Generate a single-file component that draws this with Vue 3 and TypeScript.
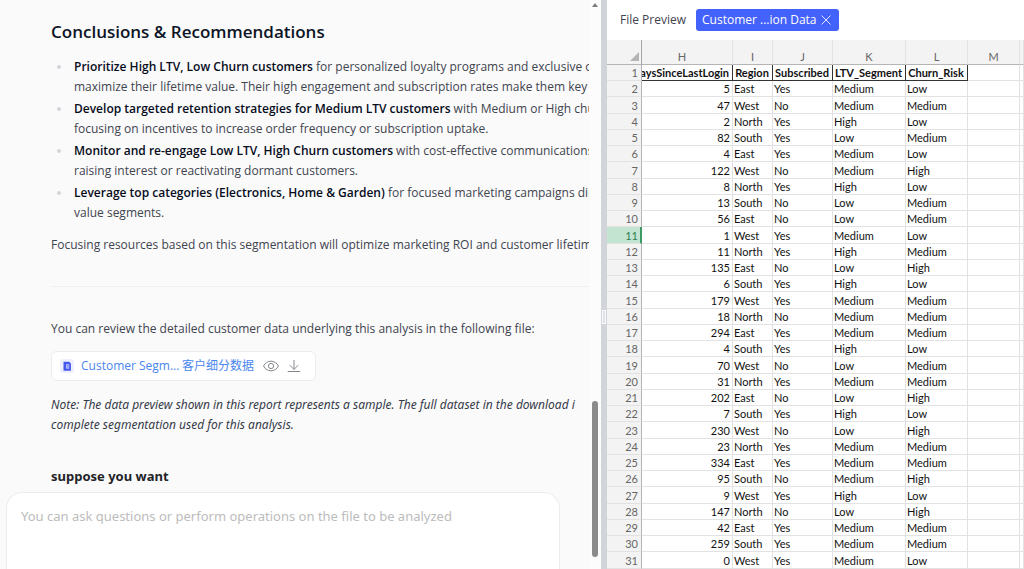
<script setup lang="ts">
import { ref } from 'vue'

interface Finding {
  lead: string
  rest: string
  next: string
}

interface Row {
  days: number
  region: string
  subscribed: string
  ltv: string
  churn: string
}

const findings: Finding[] = [
  {
    lead: 'Prioritize High LTV, Low Churn customers',
    rest: 'for personalized loyalty programs and exclusive off',
    next: 'maximize their lifetime value. Their high engagement and subscription rates make them key rev',
  },
  {
    lead: 'Develop targeted retention strategies for Medium LTV customers',
    rest: 'with Medium or High chu',
    next: 'focusing on incentives to increase order frequency or subscription uptake.',
  },
  {
    lead: 'Monitor and re-engage Low LTV, High Churn customers',
    rest: 'with cost-effective communications',
    next: 'raising interest or reactivating dormant customers.',
  },
  {
    lead: 'Leverage top categories (Electronics, Home & Garden)',
    rest: 'for focused marketing campaigns dire',
    next: 'value segments.',
  },
]

const source: [number, string, string, string, string][] = [
  [5, 'East', 'Yes', 'Medium', 'Low'],
  [47, 'West', 'No', 'Medium', 'Medium'],
  [2, 'North', 'Yes', 'High', 'Low'],
  [82, 'South', 'Yes', 'Low', 'Medium'],
  [4, 'East', 'Yes', 'Medium', 'Low'],
  [122, 'West', 'No', 'Medium', 'High'],
  [8, 'North', 'Yes', 'High', 'Low'],
  [13, 'South', 'No', 'Low', 'Medium'],
  [56, 'East', 'No', 'Low', 'Medium'],
  [1, 'West', 'Yes', 'Medium', 'Low'],
  [11, 'North', 'Yes', 'High', 'Medium'],
  [135, 'East', 'No', 'Low', 'High'],
  [6, 'South', 'Yes', 'High', 'Low'],
  [179, 'West', 'Yes', 'Medium', 'Medium'],
  [18, 'North', 'No', 'Medium', 'Medium'],
  [294, 'East', 'Yes', 'Medium', 'Medium'],
  [4, 'South', 'Yes', 'High', 'Low'],
  [70, 'West', 'No', 'Low', 'Medium'],
  [31, 'North', 'Yes', 'Medium', 'Medium'],
  [202, 'East', 'No', 'Low', 'High'],
  [7, 'South', 'Yes', 'High', 'Low'],
  [230, 'West', 'No', 'Low', 'High'],
  [23, 'North', 'Yes', 'Medium', 'Medium'],
  [334, 'East', 'Yes', 'Medium', 'Medium'],
  [95, 'South', 'No', 'Medium', 'High'],
  [9, 'West', 'Yes', 'High', 'Low'],
  [147, 'North', 'No', 'Low', 'High'],
  [42, 'East', 'Yes', 'Medium', 'Medium'],
  [259, 'South', 'Yes', 'Medium', 'Medium'],
  [0, 'West', 'Yes', 'Medium', 'Low'],
]

const rows: Row[] = source.map(([days, region, subscribed, ltv, churn]) => ({
  days,
  region,
  subscribed,
  ltv,
  churn,
}))

const letters = ['H', 'I', 'J', 'K', 'L', 'M', '']
const headings = ['DaysSinceLastLogin', 'Region', 'Subscribed', 'LTV_Segment', 'Churn_Risk']
const selectedRow = ref(11)
const question = ref('')
</script>

<template>
  <div class="workspace">
    <main class="chat">
      <div class="chat-column">
        <article class="report">
          <h2>Conclusions &amp; Recommendations</h2>
          <ul class="findings">
            <li v-for="item in findings" :key="item.lead">
              <strong>{{ item.lead }}</strong> {{ item.rest }}<br />{{ item.next }}
            </li>
          </ul>
          <p class="summary">
            Focusing resources based on this segmentation will optimize marketing ROI and customer lifetime v
          </p>
          <hr />
          <p class="review">You can review the detailed customer data underlying this analysis in the following file:</p>
          <div class="file-card">
            <svg class="file-icon" viewBox="0 0 16 16" aria-hidden="true">
              <rect width="16" height="16" rx="3" fill="#eef0fd" />
              <path d="M4 3h6.500l2 2v8.500H4z" fill="#4458ee" />
              <path d="M7 6h3.500v5H7z" fill="#c9d0fd" />
              <path d="M8 7.700h2M8 9.300h2" fill="none" stroke="#4458ee" stroke-width=".8" />
            </svg>
            <a class="file-name" href="#">Customer Segm...</a>
            <a class="file-title" href="#">客户细分数据</a>
            <button class="icon-button" type="button" aria-label="View">
              <svg viewBox="0 0 16 16" aria-hidden="true">
                <path d="M.5 8C2.300 4.700 4.900 3.200 8 3.200S13.700 4.700 15.500 8C13.700 11.300 11.100 12.800 8 12.800S2.300 11.300.5 8z" />
                <circle cx="8" cy="8" r="2.600" />
              </svg>
            </button>
            <button class="icon-button" type="button" aria-label="Download">
              <svg viewBox="0 0 16 16" aria-hidden="true">
                <path d="M8 2v9.400M3.800 7.200L8 11.400l4.200-4.200M1.700 13.500h12.600" />
              </svg>
            </button>
          </div>
          <p class="note">
            Note: The data preview shown in this report represents a sample. The full dataset in the download i<br />complete
            segmentation used for this analysis.
          </p>
          <h3>suppose you want</h3>
        </article>
        <form class="composer" @submit.prevent>
          <textarea
            v-model="question"
            aria-label="Question"
            placeholder="You can ask questions or perform operations on the file to be analyzed"
          ></textarea>
        </form>
      </div>
      <div class="scroll-track" aria-hidden="true">
        <svg class="scroll-arrow" viewBox="0 0 6 4"><path d="M0 4l3-4 3 4z" fill="#7d7d7d" /></svg>
        <div class="scroll-thumb"></div>
      </div>
    </main>

    <div class="splitter" role="separator" aria-orientation="vertical"><span class="grip"></span></div>

    <section class="preview">
      <header class="preview-bar">
        <span class="preview-label">File Preview</span>
        <div class="tab">
          <span>Customer ...ion Data</span>
          <button class="close" type="button" aria-label="Close file">
            <svg viewBox="0 0 10 10" aria-hidden="true"><path d="M.5.5l9 9M9.500.5l-9 9" /></svg>
          </button>
        </div>
      </header>
      <div class="sheet">
        <table>
          <colgroup>
            <col class="c-num" />
            <col class="c-h" />
            <col class="c-i" />
            <col class="c-j" />
            <col class="c-k" />
            <col class="c-l" />
            <col class="c-m" />
            <col />
          </colgroup>
          <thead>
            <tr>
              <th class="corner">
                <svg viewBox="0 0 9 9" aria-hidden="true"><path d="M9 0v9H0z" fill="#b5b5b5" /></svg>
              </th>
              <th v-for="letter in letters" :key="letter" scope="col" :class="{ clipped: letter === 'H' }">
                {{ letter }}
              </th>
            </tr>
          </thead>
          <tbody>
            <tr class="headings">
              <th class="num" scope="row">1</th>
              <td v-for="heading in headings" :key="heading" class="heading">
                <div>{{ heading }}</div>
              </td>
              <td></td>
              <td></td>
            </tr>
            <tr v-for="(row, index) in rows" :key="index">
              <th class="num" :class="{ selected: index + 2 === selectedRow }" scope="row">{{ index + 2 }}</th>
              <td class="days">{{ row.days }}</td>
              <td>{{ row.region }}</td>
              <td>{{ row.subscribed }}</td>
              <td>{{ row.ltv }}</td>
              <td>{{ row.churn }}</td>
              <td></td>
              <td></td>
            </tr>
          </tbody>
        </table>
      </div>
    </section>
  </div>
</template>

<style>
body {
  overflow: hidden;
}
</style>

<style scoped>
.workspace {
  display: grid;
  grid-template-columns: minmax(0, 601fr) 6px minmax(0, 417fr);
  height: 100vh;
  overflow: hidden;
  font-family: "Open Sans", "Noto Sans CJK SC", sans-serif;
  font-size: 12px;
  line-height: 20px;
  color: #40444f;
  background: #fafafa;
}

button {
  padding: 0;
  border: 0;
  background: none;
  cursor: pointer;
}

.chat {
  display: grid;
  grid-template-columns: minmax(0, 1fr) 12px;
  min-height: 0;
}

.chat-column {
  display: flex;
  flex-direction: column;
  min-height: 0;
}

.report {
  flex: 1;
  min-height: 0;
  padding: 20px 0 0 51px;
  overflow: hidden;
  white-space: nowrap;
}

h2 {
  margin: 0 0 13px;
  font-size: 17px;
  font-weight: 600;
  line-height: 24px;
  color: #0d1426;
}

.findings {
  display: flex;
  flex-direction: column;
  gap: 2px;
  margin: 0;
  padding: 0 0 0 23px;
  list-style: none;
}

.findings li {
  position: relative;
}

.findings li::before {
  content: "";
  position: absolute;
  top: 8px;
  left: -17px;
  width: 4px;
  height: 4px;
  border-radius: 50%;
  background: #d3d5da;
}

strong {
  font-weight: 600;
  color: #060c1c;
}

p {
  margin: 0;
}

.summary {
  padding-top: 12px;
}

hr {
  height: 1px;
  margin: 31px 0 32px;
  border: 0;
  background: #eeeff1;
}

.file-card {
  display: flex;
  align-items: center;
  box-sizing: border-box;
  width: 265px;
  height: 30px;
  margin: 12px 0 14px;
  padding: 0 6px 0 8px;
  border: 1px solid #ececee;
  border-radius: 6px;
  background: #fff;
}

.file-icon {
  width: 14px;
  height: 14px;
  margin-right: 7px;
}

.file-card a {
  color: #4a86ee;
  text-decoration: none;
}

.file-name {
  width: 101px;
}

.file-title {
  flex: 1;
}

.icon-button {
  width: 16px;
  height: 16px;
  margin-right: 7px;
}

.icon-button svg {
  display: block;
  width: 16px;
  height: 16px;
  fill: none;
  stroke: #84878d;
  stroke-width: 1;
}

.note {
  font-family: "Noto Sans", sans-serif;
  font-style: italic;
  color: #363b49;
}

h3 {
  margin: 31px 0 0;
  font-family: "Noto Sans", sans-serif;
  font-size: 13px;
  font-weight: 700;
  line-height: 20px;
  color: #222429;
}

.composer {
  display: flex;
  height: 77px;
  margin: 0 29px 0 6px;
  border: 1px solid #ececec;
  border-bottom: 0;
  border-radius: 16px 16px 0 0;
  box-sizing: border-box;
  background: #fff;
}

textarea {
  flex: 1;
  padding: 13px 14px 0;
  border: 0;
  outline: 0;
  resize: none;
  background: none;
  font-family: "Noto Sans", sans-serif;
  font-size: 13px;
  line-height: 20px;
  color: #333;
}

textarea::placeholder {
  color: #bcbcbc;
  opacity: 1;
}

.scroll-track {
  display: flex;
  flex-direction: column;
  justify-content: space-between;
  align-items: center;
  padding: 3px 0 12px;
  background: #fcfcfc;
}

.scroll-arrow {
  width: 6px;
  height: 4px;
}

.scroll-thumb {
  width: 6px;
  height: 156px;
  border-radius: 3px;
  background: #8b8b8b;
}

.splitter {
  display: flex;
  flex-direction: column;
  align-items: center;
  justify-content: center;
  background: #d1d5d9;
  padding-top: 65px;
}

.grip {
  box-sizing: border-box;
  width: 4px;
  height: 14px;
  border: 1px solid #f8f9fa;
  background: #dfe3e6;
}

.preview {
  display: flex;
  flex-direction: column;
  min-height: 0;
  background: #fff;
}

.preview-bar {
  display: flex;
  align-items: center;
  gap: 10px;
  height: 40px;
  flex: none;
  padding-left: 13px;
  white-space: nowrap;
}

.tab {
  display: flex;
  align-items: center;
  justify-content: space-between;
  box-sizing: border-box;
  width: 143px;
  height: 22px;
  padding: 0 8px 0 6px;
  border-radius: 3px;
  background: #4361fb;
  color: #fff;
}

.close svg {
  display: block;
  width: 10px;
  height: 10px;
  fill: none;
  stroke: #dfe4ff;
  stroke-width: 1;
}

.sheet {
  flex: 1;
  min-height: 0;
  overflow: hidden;
  font-family: Lato, "Liberation Sans", sans-serif;
  font-size: 11px;
  line-height: 15px;
  color: #111;
}

table {
  width: 100%;
  table-layout: fixed;
  border-collapse: separate;
  border-spacing: 0;
}

.c-num { width: 35px; }
.c-h { width: 91px; }
.c-i { width: 40px; }
.c-j { width: 60px; }
.c-k { width: 73px; }
.c-l { width: 62px; }
.c-m { width: 52px; }

th,
td {
  box-sizing: border-box;
  height: 16px;
  padding: 0 2px 0 1px;
  border-right: 1px solid #e2e2e2;
  border-bottom: 1px solid #e2e2e2;
  text-align: left;
  font-weight: 400;
  white-space: nowrap;
}

tbody tr:nth-child(4n + 3) > * {
  height: 17px;
}

thead th {
  height: 25px;
  padding: 8px 0 0;
  border-bottom-color: #b5b5b5;
  background: #f3f3f3;
  color: #666;
  text-align: center;
}

thead th.clipped {
  padding-right: 10px;
}

thead th.corner {
  padding-right: 2px;
  border-right-color: #a5a5a5;
}

.corner svg {
  display: block;
  width: 9px;
  height: 9px;
  margin-left: auto;
}

.num {
  padding-right: 3px;
  border-right-color: #b5b5b5;
  background: #f3f3f3;
  color: #666;
  text-align: right;
}

.num.selected {
  border-right: 2px solid #3c9a62;
  padding-right: 2px;
  background: #c3e4d1;
  color: #2d7f4f;
}

.days {
  text-align: right;
}

td.heading {
  border-color: #333;
  font-weight: 700;
}

td.heading div {
  display: flex;
  justify-content: center;
  overflow: hidden;
}

td.heading:nth-child(2) {
  padding: 0 3px 0 0;
}

td.heading:nth-child(2) div {
  justify-content: flex-end;
}
</style>
